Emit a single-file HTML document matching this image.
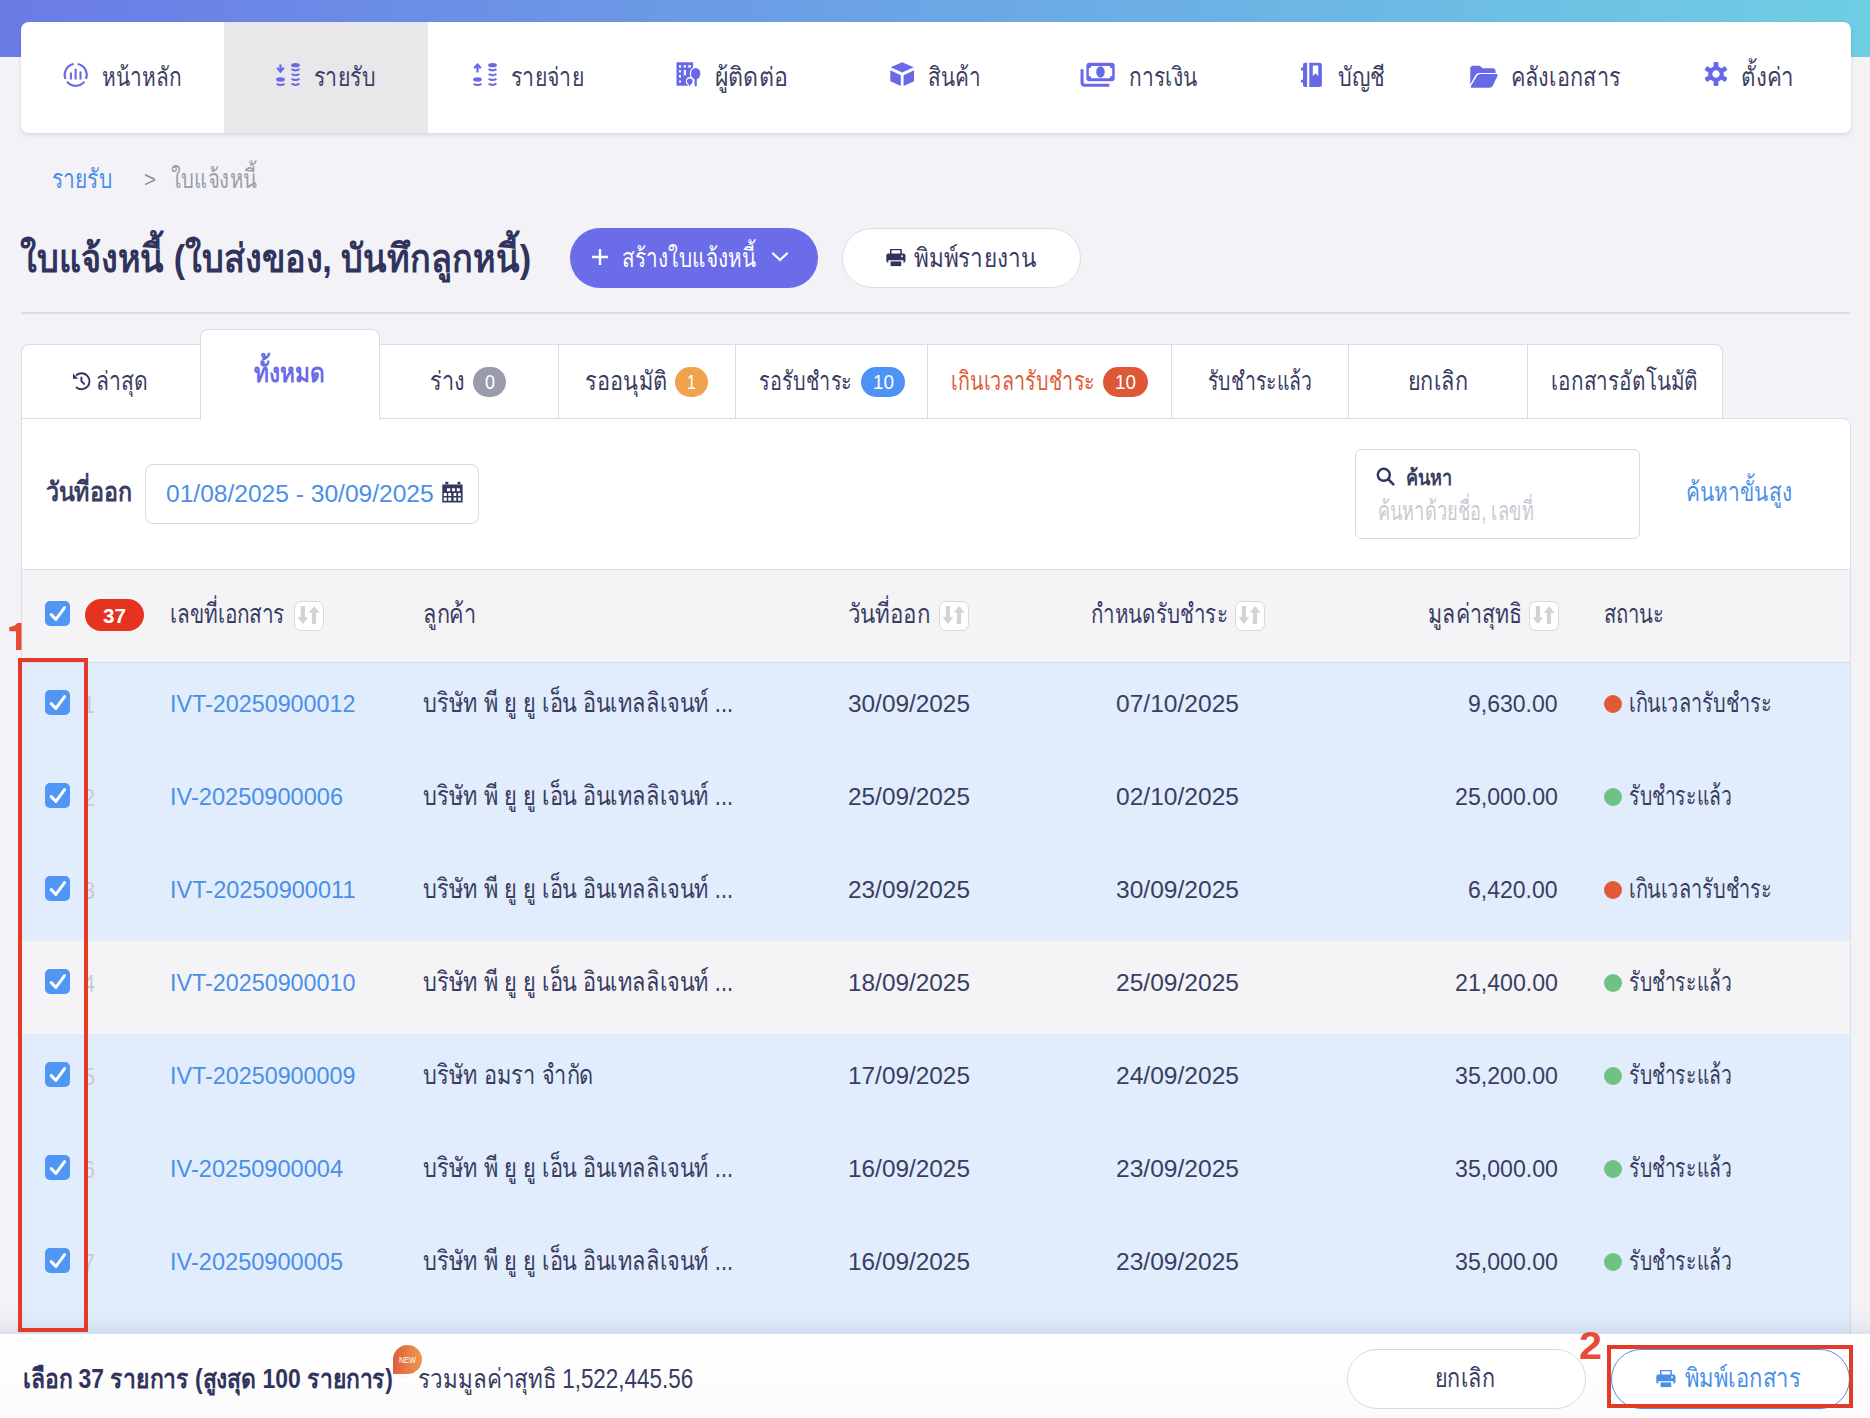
<!DOCTYPE html>
<html><head><meta charset="utf-8"><style>
html,body{margin:0;padding:0}
body{width:1870px;height:1418px;overflow:hidden;position:relative;background:#f3f3f7;font-family:"Liberation Sans", sans-serif}
.t{position:absolute;white-space:nowrap;transform-origin:0 0}
</style></head><body>
<div style="position:absolute;left:0;top:0;width:1870px;height:57px;background:linear-gradient(90deg,#6b7be6 0%,#6ba6e5 50%,#6ecee3 100%)"></div>
<div style="position:absolute;left:21px;top:22px;width:1830px;height:111px;background:#fff;border-radius:8px;box-shadow:0 2px 4px rgba(40,40,80,.14);overflow:hidden"><div style="position:absolute;left:203px;top:0;width:204px;height:111px;background:#e8e8ea"></div></div>
<svg width="26" height="26" viewBox="0 0 26 26" style="position:absolute;left:62.5px;top:61.5px"><g fill="none" stroke="#6869e7" stroke-width="2.2"><path d="M2.5 16.92A11 11 0 0 1 10.79 1.97"/><path d="M14.61 1.97A11 11 0 0 1 22.9 16.92"/><path d="M21.37 19.57A11 11 0 0 1 4.03 19.57"/><path d="M7.9 10.4V17.6M12.6 6.8V17.6M17.5 9.5V17.6" stroke-width="2.1"/></g></svg>
<svg width="25" height="25" viewBox="0 0 25 25" style="position:absolute;left:275.5px;top:63px"><path d="M4.5 1.5V8" stroke="#6869e7" stroke-width="2.2"/><path d="M1.2 4.8L4.5 8.5L7.8 4.8" fill="none" stroke="#6869e7" stroke-width="2.2"/><ellipse cx="4.5" cy="16.5" rx="4.3" ry="2.2" fill="#6869e7"/><path d="M0.6 20.8 Q4.5 23.4 8.4 20.8" fill="none" stroke="#6869e7" stroke-width="2"/><ellipse cx="19.5" cy="2.2" rx="4.3" ry="2.1" fill="#6869e7"/><path d="M15.6 6.2 Q19.5 8.8 23.4 6.2" fill="none" stroke="#6869e7" stroke-width="2"/><path d="M15.6 11.0 Q19.5 13.6 23.4 11.0" fill="none" stroke="#6869e7" stroke-width="2"/><path d="M15.6 15.8 Q19.5 18.400000000000002 23.4 15.8" fill="none" stroke="#6869e7" stroke-width="2"/><path d="M15.6 20.599999999999998 Q19.5 23.2 23.4 20.599999999999998" fill="none" stroke="#6869e7" stroke-width="2"/></svg>
<svg width="25" height="25" viewBox="0 0 25 25" style="position:absolute;left:472.5px;top:63px"><path d="M4.5 2.5V9.5" stroke="#6869e7" stroke-width="2.2"/><path d="M1.2 5.2L4.5 1.5L7.8 5.2" fill="none" stroke="#6869e7" stroke-width="2.2"/><ellipse cx="4.5" cy="16.5" rx="4.3" ry="2.2" fill="#6869e7"/><path d="M0.6 20.8 Q4.5 23.4 8.4 20.8" fill="none" stroke="#6869e7" stroke-width="2"/><ellipse cx="19.5" cy="2.2" rx="4.3" ry="2.1" fill="#6869e7"/><path d="M15.6 6.2 Q19.5 8.8 23.4 6.2" fill="none" stroke="#6869e7" stroke-width="2"/><path d="M15.6 11.0 Q19.5 13.6 23.4 11.0" fill="none" stroke="#6869e7" stroke-width="2"/><path d="M15.6 15.8 Q19.5 18.400000000000002 23.4 15.8" fill="none" stroke="#6869e7" stroke-width="2"/><path d="M15.6 20.599999999999998 Q19.5 23.2 23.4 20.599999999999998" fill="none" stroke="#6869e7" stroke-width="2"/></svg>
<svg width="26" height="26" viewBox="0 0 26 26" style="position:absolute;left:676px;top:62px"><path fill="#6869e7" fill-rule="evenodd" d="M0.5 0.3H17.1V15H12.5V23.7H0.5Z M3 3.2V5.4H5V3.2Z M7.8 3.2V5.4H9.9V3.2Z M12.3 3.2V5.4H14.9V3.2Z M3 8.2V10.5H5V8.2Z M7.8 8V13.3H9.9V8Z M3 13V15.6H5V13Z M3 18.4V20.6H5V18.4Z"/><ellipse cx="19.7" cy="11.6" rx="5.9" ry="6.9" fill="#fff"/><path d="M19.65 17V24.3" stroke="#fff" stroke-width="4.6" stroke-linecap="round"/><circle cx="13.8" cy="19.3" r="4" fill="#fff"/><path d="M10.6 20.5L13.7 26.2L16.9 20.5Z" fill="#fff"/><ellipse cx="19.7" cy="11.6" rx="4.65" ry="5.7" fill="#6869e7"/><path d="M19.65 16V23.3" stroke="#6869e7" stroke-width="2.3" stroke-linecap="round"/><circle cx="13.8" cy="19.3" r="2.8" fill="#6869e7"/><path d="M11.4 20.6L13.7 24.3L16.1 20.6Z" fill="#6869e7"/></svg>
<svg width="25" height="25" viewBox="0 0 25 25" style="position:absolute;left:890px;top:62px"><path fill="#6869e7" d="M12.2 0.3L23.7 5.3L12.2 10.6L0.7 5.3Z M0.3 8.3L10.8 13.2V24L0.3 19.2Z M13.6 13.2L24 8.3V19.2L13.6 24Z"/></svg>
<svg width="36" height="26" viewBox="0 0 36 26" style="position:absolute;left:1079.5px;top:61.5px"><path fill="#6869e7" fill-rule="evenodd" d="M9.4 0.8H31.7Q34.7 0.8 34.7 3.8V16.3Q34.7 19.3 31.7 19.3H9.4Q6.4 19.3 6.4 16.3V3.8Q6.4 0.8 9.4 0.8Z M11.3 3.9H29.7Q30 6.3 32.2 6.4V13.8Q30 13.9 29.7 16.3H11.3Q11 13.9 8.8 13.8V6.4Q11 6.3 11.3 3.9Z"/><ellipse cx="20.5" cy="10" rx="4.25" ry="5.8" fill="#6869e7"/><path d="M2.05 7.2V20.5Q2.05 23.3 4.85 23.3H29.3" fill="none" stroke="#6869e7" stroke-width="3"/></svg>
<svg width="24" height="26" viewBox="0 0 24 26" style="position:absolute;left:1300px;top:61.5px"><path fill="#6869e7" d="M5 0.7H7.1V24.9H5Q3 24.9 3 22.9V20.6H1.2Q0.1 19.2 1.2 17.8H3V8.4H1.2Q0.1 7 1.2 5.6H3V2.7Q3 0.7 5 0.7Z"/><path fill="#6869e7" fill-rule="evenodd" d="M9.3 0.7H19.4Q21.9 0.7 21.9 3.2V22.4Q21.9 24.9 19.4 24.9H9.3Z M12.8 3.4V13.9L15.5 11.4L18.2 13.9V3.4Z"/></svg>
<svg width="29" height="24" viewBox="0 0 29 24" style="position:absolute;left:1469.5px;top:64.5px"><path fill="#6869e7" d="M0.3 3.5Q0.3 0.8 3 0.8H9.8L12.5 3.3H23Q25.5 3.3 25.6 6.5V8H8.8Q6.6 8 5.6 10L0.3 19.5Z"/><path fill="#6869e7" d="M7.2 10.5Q8 9 10 9H26.5Q28.3 9 27.6 10.8L22.8 20.8Q21.8 22.8 19.6 22.8H1.8Q0 22.8 0.8 21.2Z"/></svg>
<svg width="24" height="26" viewBox="0 0 24 26" style="position:absolute;left:1703.6px;top:60.9px"><g fill="#6869e7"><path fill-rule="evenodd" d="M12 5.2A7.8 7.8 0 1 1 11.99 5.2Z M12 9.3A3.7 3.7 0 1 0 12.01 9.3Z"/><rect x="9.6" y="1" width="4.8" height="6" rx="1"/><rect x="9.6" y="19" width="4.8" height="6" rx="1"/><rect x="9.6" y="1" width="4.8" height="6" rx="1" transform="rotate(60 12 13)"/><rect x="9.6" y="19" width="4.8" height="6" rx="1" transform="rotate(60 12 13)"/><rect x="9.6" y="1" width="4.8" height="6" rx="1" transform="rotate(-60 12 13)"/><rect x="9.6" y="19" width="4.8" height="6" rx="1" transform="rotate(-60 12 13)"/></g></svg>
<div style="position:absolute;left:570px;top:228px;width:248px;height:60px;border-radius:30px;background:#6b6ce8"></div>
<svg width="20" height="20" viewBox="0 0 20 20" style="position:absolute;left:590px;top:247px"><path d="M10 2V18M2 10H18" stroke="#fff" stroke-width="2.4"/></svg>
<svg width="18" height="12" viewBox="0 0 18 12" style="position:absolute;left:771px;top:251px"><path d="M2 2.5L9 9L16 2.5" fill="none" stroke="#fff" stroke-width="2.2" stroke-linecap="round"/></svg>
<div style="position:absolute;left:842px;top:228px;width:237px;height:58px;border-radius:30px;background:#fff;border:1px solid #dcdce4"></div>
<svg width="20" height="20" viewBox="0 0 20 20" style="position:absolute;left:885.5px;top:247px"><path fill="#30345c" fill-rule="evenodd" d="M4 2H15.8V6.6H17.5Q19.5 6.6 19.5 8.6V13.5Q19.5 15.7 17.5 15.7V13.2H2.3V15.7Q0.3 15.7 0.3 13.5V8.6Q0.3 6.6 2.3 6.6H4Z M5.5 3.3V6.6H14.3V3.3Z M16 8.3A0.9 0.9 0 1 0 16.01 8.3Z"/><rect x="4.6" y="14.4" width="10.6" height="4.7" fill="#30345c"/></svg>
<div style="position:absolute;left:21px;top:312px;width:1829px;height:1.5px;background:#dcdce3"></div>
<div style="position:absolute;left:21px;top:344px;width:1702px;height:75px;background:#fff;border:1px solid #dddce6;border-bottom:none;border-radius:8px 8px 0 0;box-sizing:border-box"></div>
<div style="position:absolute;left:557.5px;top:345px;width:1px;height:74px;background:#dddce6"></div>
<div style="position:absolute;left:735px;top:345px;width:1px;height:74px;background:#dddce6"></div>
<div style="position:absolute;left:927px;top:345px;width:1px;height:74px;background:#dddce6"></div>
<div style="position:absolute;left:1170.5px;top:345px;width:1px;height:74px;background:#dddce6"></div>
<div style="position:absolute;left:1348px;top:345px;width:1px;height:74px;background:#dddce6"></div>
<div style="position:absolute;left:1527px;top:345px;width:1px;height:74px;background:#dddce6"></div>
<div style="position:absolute;left:21px;top:418px;width:1830px;height:1000px;background:#fff;border:1px solid #dddce6;border-radius:0 8px 0 0;box-sizing:border-box"></div>
<div style="position:absolute;left:200px;top:329px;width:180px;height:91px;background:#fff;border:1px solid #dddce6;border-bottom:none;border-radius:8px 8px 0 0;box-sizing:border-box"></div>
<svg width="30" height="30" viewBox="0 0 30 30" style="position:absolute;left:66px;top:362px"><g fill="none" stroke="#30345c" stroke-width="1.9"><path d="M10.57 12.9A8 8 0 1 1 10.57 25.5" stroke-linecap="round"/><path d="M15.4 15.4V19.2L18.1 21.9" stroke-linecap="round"/></g><path d="M7 11.6L7 16.8L12.2 16.8Z" fill="#30345c"/></svg>
<div style="position:absolute;left:473px;top:367px;width:33px;height:30px;border-radius:15px;background:#9b9cab"></div>
<div style="position:absolute;left:675px;top:367px;width:33px;height:30px;border-radius:15px;background:#f0a24c"></div>
<div style="position:absolute;left:861px;top:367px;width:44px;height:30px;border-radius:15px;background:#4c93f4"></div>
<div style="position:absolute;left:1103px;top:367px;width:45px;height:30px;border-radius:15px;background:#dd5836"></div>
<div style="position:absolute;left:144.5px;top:464px;width:334px;height:60px;border:1px solid #d9d9e4;border-radius:8px;box-sizing:border-box;background:#fff"></div>
<svg width="21" height="22" viewBox="0 0 21 22" style="position:absolute;left:442px;top:481px"><path fill="#34375e" fill-rule="evenodd" d="M0.3 3.6H20.6V21.5H0.3Z M5 7.3V10.3H8.2V7.3Z M10 7.3V10.3H13V7.3Z M14.8 7.3V10.3H17.8V7.3Z M1.8 11.9V14.9H4.8V11.9Z M6.2 11.9V14.9H9.2V11.9Z M11.6 11.9V14.9H14.3V11.9Z M16.1 11.9V14.9H18.8V11.9Z M1.8 16.6V19.8H4.8V16.6Z M6.2 16.6V19.8H9.2V16.6Z M11.6 16.6V19.8H14.3V16.6Z M16.1 16.6V19.8H18.8V16.6Z"/><rect x="3.3" y="0.8" width="3" height="2.5" fill="#34375e"/><rect x="15.5" y="0.8" width="3" height="2.5" fill="#34375e"/></svg>
<div style="position:absolute;left:1355px;top:449px;width:285px;height:90px;border:1px solid #d9d9e4;border-radius:6px;box-sizing:border-box;background:#fff"></div>
<svg width="19" height="19" viewBox="0 0 19 19" style="position:absolute;left:1375.5px;top:466.8px"><circle cx="7.8" cy="7.8" r="6" fill="none" stroke="#30345c" stroke-width="2.4"/><path d="M12.2 12.2L17.3 17.3" stroke="#30345c" stroke-width="2.6" stroke-linecap="round"/></svg>
<div style="position:absolute;left:22px;top:569px;width:1828px;height:94px;background:#f4f4f7;border-top:1px solid #dddce6;border-bottom:1px solid #d7dbe8;box-sizing:border-box"></div>
<div style="position:absolute;left:45px;top:601px;width:25px;height:25px;border-radius:5px;background:#5096f5"></div><svg width="25" height="25" viewBox="0 0 25 25" style="position:absolute;left:45px;top:601px"><path d="M6.2 13.6L10.9 18.4L19.6 6.6" fill="none" stroke="#fff" stroke-width="3" stroke-linecap="round" stroke-linejoin="round"/></svg>
<div style="position:absolute;left:85px;top:599px;width:59px;height:32px;border-radius:16px;background:#e5331f"></div>
<div style="position:absolute;left:294px;top:601px;width:30px;height:30px;border:1.5px solid #d9d9d9;border-radius:7px;background:#fff;box-sizing:border-box"></div><svg width="30" height="30" viewBox="0 0 30 30" style="position:absolute;left:294px;top:601px"><path fill="#d2d2d2" d="M6.8 5H11V16.3H14.3L8.9 23L3.5 16.3H6.8Z M20.2 5L25.6 11.8H22.1V23H17.9V11.8H14.8Z"/></svg>
<div style="position:absolute;left:939px;top:601px;width:30px;height:30px;border:1.5px solid #d9d9d9;border-radius:7px;background:#fff;box-sizing:border-box"></div><svg width="30" height="30" viewBox="0 0 30 30" style="position:absolute;left:939px;top:601px"><path fill="#d2d2d2" d="M6.8 5H11V16.3H14.3L8.9 23L3.5 16.3H6.8Z M20.2 5L25.6 11.8H22.1V23H17.9V11.8H14.8Z"/></svg>
<div style="position:absolute;left:1235px;top:601px;width:30px;height:30px;border:1.5px solid #d9d9d9;border-radius:7px;background:#fff;box-sizing:border-box"></div><svg width="30" height="30" viewBox="0 0 30 30" style="position:absolute;left:1235px;top:601px"><path fill="#d2d2d2" d="M6.8 5H11V16.3H14.3L8.9 23L3.5 16.3H6.8Z M20.2 5L25.6 11.8H22.1V23H17.9V11.8H14.8Z"/></svg>
<div style="position:absolute;left:1529px;top:601px;width:30px;height:30px;border:1.5px solid #d9d9d9;border-radius:7px;background:#fff;box-sizing:border-box"></div><svg width="30" height="30" viewBox="0 0 30 30" style="position:absolute;left:1529px;top:601px"><path fill="#d2d2d2" d="M6.8 5H11V16.3H14.3L8.9 23L3.5 16.3H6.8Z M20.2 5L25.6 11.8H22.1V23H17.9V11.8H14.8Z"/></svg>
<div style="position:absolute;left:22px;top:663px;width:1828px;height:92px;background:#e1edfc"></div>
<div style="position:absolute;left:22px;top:755px;width:1828px;height:93px;background:#e1edfc"></div>
<div style="position:absolute;left:22px;top:848px;width:1828px;height:93px;background:#e1edfc"></div>
<div style="position:absolute;left:22px;top:941px;width:1828px;height:93px;background:#f4f4f7"></div>
<div style="position:absolute;left:22px;top:1034px;width:1828px;height:93px;background:#e1edfc"></div>
<div style="position:absolute;left:22px;top:1127px;width:1828px;height:93px;background:#e1edfc"></div>
<div style="position:absolute;left:22px;top:1220px;width:1828px;height:93px;background:#e1edfc"></div>
<div style="position:absolute;left:22px;top:1313px;width:1828px;height:93px;background:#e1edfc"></div>
<div style="position:absolute;left:45px;top:690px;width:25px;height:25px;border-radius:5px;background:#5096f5"></div><svg width="25" height="25" viewBox="0 0 25 25" style="position:absolute;left:45px;top:690px"><path d="M6.2 13.6L10.9 18.4L19.6 6.6" fill="none" stroke="#fff" stroke-width="3" stroke-linecap="round" stroke-linejoin="round"/></svg>
<div style="position:absolute;left:1604px;top:695px;width:18px;height:18px;border-radius:9px;background:#e05a38"></div>
<div style="position:absolute;left:45px;top:783px;width:25px;height:25px;border-radius:5px;background:#5096f5"></div><svg width="25" height="25" viewBox="0 0 25 25" style="position:absolute;left:45px;top:783px"><path d="M6.2 13.6L10.9 18.4L19.6 6.6" fill="none" stroke="#fff" stroke-width="3" stroke-linecap="round" stroke-linejoin="round"/></svg>
<div style="position:absolute;left:1604px;top:788px;width:18px;height:18px;border-radius:9px;background:#6fc284"></div>
<div style="position:absolute;left:45px;top:876px;width:25px;height:25px;border-radius:5px;background:#5096f5"></div><svg width="25" height="25" viewBox="0 0 25 25" style="position:absolute;left:45px;top:876px"><path d="M6.2 13.6L10.9 18.4L19.6 6.6" fill="none" stroke="#fff" stroke-width="3" stroke-linecap="round" stroke-linejoin="round"/></svg>
<div style="position:absolute;left:1604px;top:881px;width:18px;height:18px;border-radius:9px;background:#e05a38"></div>
<div style="position:absolute;left:45px;top:969px;width:25px;height:25px;border-radius:5px;background:#5096f5"></div><svg width="25" height="25" viewBox="0 0 25 25" style="position:absolute;left:45px;top:969px"><path d="M6.2 13.6L10.9 18.4L19.6 6.6" fill="none" stroke="#fff" stroke-width="3" stroke-linecap="round" stroke-linejoin="round"/></svg>
<div style="position:absolute;left:1604px;top:974px;width:18px;height:18px;border-radius:9px;background:#6fc284"></div>
<div style="position:absolute;left:45px;top:1062px;width:25px;height:25px;border-radius:5px;background:#5096f5"></div><svg width="25" height="25" viewBox="0 0 25 25" style="position:absolute;left:45px;top:1062px"><path d="M6.2 13.6L10.9 18.4L19.6 6.6" fill="none" stroke="#fff" stroke-width="3" stroke-linecap="round" stroke-linejoin="round"/></svg>
<div style="position:absolute;left:1604px;top:1067px;width:18px;height:18px;border-radius:9px;background:#6fc284"></div>
<div style="position:absolute;left:45px;top:1155px;width:25px;height:25px;border-radius:5px;background:#5096f5"></div><svg width="25" height="25" viewBox="0 0 25 25" style="position:absolute;left:45px;top:1155px"><path d="M6.2 13.6L10.9 18.4L19.6 6.6" fill="none" stroke="#fff" stroke-width="3" stroke-linecap="round" stroke-linejoin="round"/></svg>
<div style="position:absolute;left:1604px;top:1160px;width:18px;height:18px;border-radius:9px;background:#6fc284"></div>
<div style="position:absolute;left:45px;top:1248px;width:25px;height:25px;border-radius:5px;background:#5096f5"></div><svg width="25" height="25" viewBox="0 0 25 25" style="position:absolute;left:45px;top:1248px"><path d="M6.2 13.6L10.9 18.4L19.6 6.6" fill="none" stroke="#fff" stroke-width="3" stroke-linecap="round" stroke-linejoin="round"/></svg>
<div style="position:absolute;left:1604px;top:1253px;width:18px;height:18px;border-radius:9px;background:#6fc284"></div>
<div style="position:absolute;left:0;top:1304px;width:1870px;height:30px;background:linear-gradient(rgba(20,50,90,0),rgba(20,50,90,.03) 60%,rgba(20,50,90,.09))"></div>
<div style="position:absolute;left:0;top:1334px;width:1870px;height:84px;background:linear-gradient(#fff,#fbfbfc)"></div>
<div style="position:absolute;left:1346.5px;top:1349px;width:239px;height:60px;border-radius:30px;border:1px solid #d9d9e3;box-sizing:border-box;background:#fff"></div>
<div style="position:absolute;left:1610.5px;top:1349px;width:239px;height:60px;border-radius:30px;border:1.3px solid #4a8fe8;box-sizing:border-box;background:#fff"></div>
<svg width="20" height="20" viewBox="0 0 20 20" style="position:absolute;left:1656px;top:1367.5px"><path fill="#4a8fe8" fill-rule="evenodd" d="M4 2H15.8V6.6H17.5Q19.5 6.6 19.5 8.6V13.5Q19.5 15.7 17.5 15.7V13.2H2.3V15.7Q0.3 15.7 0.3 13.5V8.6Q0.3 6.6 2.3 6.6H4Z M5.5 3.3V6.6H14.3V3.3Z M16 8.3A0.9 0.9 0 1 0 16.01 8.3Z"/><rect x="4.6" y="14.4" width="10.6" height="4.7" fill="#4a8fe8"/></svg>
<div style="position:absolute;left:392.5px;top:1344.5px;width:29.5px;height:29.5px;border-radius:15px 15px 15px 0;background:linear-gradient(90deg,#df5d3c,#ec9a50);box-shadow:0 0 0 2px #fff,0 1px 3px rgba(0,0,0,.18)"></div>
<div class=t style="left:101.6px;top:64.0px;font-size:26px;line-height:26px;font-weight:400;color:#3d4064;transform:scaleX(0.802)">หน้าหลัก</div>
<div class=t style="left:313.6px;top:64.0px;font-size:26px;line-height:26px;font-weight:400;color:#3d4064;transform:scaleX(0.821)">รายรับ</div>
<div class=t style="left:511.0px;top:64.0px;font-size:26px;line-height:26px;font-weight:400;color:#3d4064;transform:scaleX(0.818)">รายจ่าย</div>
<div class=t style="left:715.0px;top:64.0px;font-size:26px;line-height:26px;font-weight:400;color:#3d4064;transform:scaleX(0.890)">ผู้ติดต่อ</div>
<div class=t style="left:928.0px;top:64.0px;font-size:26px;line-height:26px;font-weight:400;color:#3d4064;transform:scaleX(0.797)">สินค้า</div>
<div class=t style="left:1129.0px;top:64.0px;font-size:26px;line-height:26px;font-weight:400;color:#3d4064;transform:scaleX(0.806)">การเงิน</div>
<div class=t style="left:1337.5px;top:64.0px;font-size:26px;line-height:26px;font-weight:400;color:#3d4064;transform:scaleX(0.833)">บัญชี</div>
<div class=t style="left:1511.0px;top:64.0px;font-size:26px;line-height:26px;font-weight:400;color:#3d4064;transform:scaleX(0.833)">คลังเอกสาร</div>
<div class=t style="left:1741.0px;top:64.0px;font-size:26px;line-height:26px;font-weight:400;color:#3d4064;transform:scaleX(0.855)">ตั้งค่า</div>
<div class=t style="left:51.5px;top:165.5px;font-size:26px;line-height:26px;font-weight:400;color:#4a8fe8;transform:scaleX(0.807)">รายรับ</div>
<div class=t style="left:144.0px;top:169.4px;font-size:22px;line-height:22px;font-weight:400;color:#8d8e9e;transform:scaleX(0.933)">></div>
<div class=t style="left:171.0px;top:165.5px;font-size:26px;line-height:26px;font-weight:400;color:#9c9cab;transform:scaleX(0.782)">ใบแจ้งหนี้</div>
<div class=t style="left:20.4px;top:239.3px;font-size:39px;line-height:39px;font-weight:700;color:#30345c;transform:scaleX(0.879)">ใบแจ้งหนี้ (ใบส่งของ, บันทึกลูกหนี้)</div>
<div class=t style="left:622.0px;top:244.5px;font-size:26px;line-height:26px;font-weight:400;color:#ffffff;transform:scaleX(0.798)">สร้างใบแจ้งหนี้</div>
<div class=t style="left:914.0px;top:244.5px;font-size:26px;line-height:26px;font-weight:400;color:#3a3d62;transform:scaleX(0.869)">พิมพ์รายงาน</div>
<div class=t style="left:96.0px;top:368.0px;font-size:26px;line-height:26px;font-weight:400;color:#3a3d62;transform:scaleX(0.812)">ล่าสุด</div>
<div class=t style="left:253.5px;top:359.7px;font-size:27px;line-height:27px;font-weight:700;color:#6a6ce6;transform:scaleX(0.838)">ทั้งหมด</div>
<div class=t style="left:430.0px;top:368.0px;font-size:26px;line-height:26px;font-weight:400;color:#3a3d62;transform:scaleX(0.833)">ร่าง</div>
<div class=t style="left:585.0px;top:368.0px;font-size:26px;line-height:26px;font-weight:400;color:#3a3d62;transform:scaleX(0.837)">รออนุมัติ</div>
<div class=t style="left:759.0px;top:368.0px;font-size:26px;line-height:26px;font-weight:400;color:#3a3d62;transform:scaleX(0.762)">รอรับชำระ</div>
<div class=t style="left:951.0px;top:368.0px;font-size:26px;line-height:26px;font-weight:400;color:#e05a3a;transform:scaleX(0.758)">เกินเวลารับชำระ</div>
<div class=t style="left:1207.5px;top:368.0px;font-size:26px;line-height:26px;font-weight:400;color:#3a3d62;transform:scaleX(0.746)">รับชำระแล้ว</div>
<div class=t style="left:1407.5px;top:368.0px;font-size:26px;line-height:26px;font-weight:400;color:#3a3d62;transform:scaleX(0.833)">ยกเลิก</div>
<div class=t style="left:1551.0px;top:368.0px;font-size:26px;line-height:26px;font-weight:400;color:#3a3d62;transform:scaleX(0.795)">เอกสารอัตโนมัติ</div>
<div class=t style="left:484.5px;top:372.5px;font-size:19.5px;line-height:19.5px;font-weight:400;color:#ffffff;transform:scaleX(0.921)">0</div>
<div class=t style="left:687.0px;top:372.5px;font-size:19.5px;line-height:19.5px;font-weight:400;color:#ffffff;transform:scaleX(0.829)">1</div>
<div class=t style="left:873.0px;top:372.5px;font-size:19.5px;line-height:19.5px;font-weight:400;color:#ffffff;transform:scaleX(0.968)">10</div>
<div class=t style="left:1115.0px;top:372.5px;font-size:19.5px;line-height:19.5px;font-weight:400;color:#ffffff;transform:scaleX(0.968)">10</div>
<div class=t style="left:45.7px;top:479.1px;font-size:27px;line-height:27px;font-weight:700;color:#3a3d62;transform:scaleX(0.862)">วันที่ออก</div>
<div class=t style="left:166.0px;top:482.5px;font-size:23px;line-height:23px;font-weight:400;color:#4a8fe8;transform:scaleX(1.068)">01/08/2025 - 30/09/2025</div>
<div class=t style="left:1405.5px;top:467.2px;font-size:21px;line-height:21px;font-weight:700;color:#3a3d62;transform:scaleX(0.861)">ค้นหา</div>
<div class=t style="left:1377.6px;top:498.2px;font-size:26px;line-height:26px;font-weight:400;color:#c9c9d4;transform:scaleX(0.699)">ค้นหาด้วยชื่อ, เลขที่</div>
<div class=t style="left:1686.0px;top:479.0px;font-size:26px;line-height:26px;font-weight:400;color:#4a8fe8;transform:scaleX(0.803)">ค้นหาขั้นสูง</div>
<div class=t style="left:102.5px;top:605.2px;font-size:21px;line-height:21px;font-weight:700;color:#ffffff;transform:scaleX(0.985)">37</div>
<div class=t style="left:169.8px;top:600.9px;font-size:27px;line-height:27px;font-weight:400;color:#3a3d62;transform:scaleX(0.772)">เลขที่เอกสาร</div>
<div class=t style="left:423.0px;top:600.9px;font-size:27px;line-height:27px;font-weight:400;color:#3a3d62;transform:scaleX(0.803)">ลูกค้า</div>
<div class=t style="left:848.0px;top:600.9px;font-size:27px;line-height:27px;font-weight:400;color:#3a3d62;transform:scaleX(0.828)">วันที่ออก</div>
<div class=t style="left:1090.6px;top:600.9px;font-size:27px;line-height:27px;font-weight:400;color:#3a3d62;transform:scaleX(0.762)">กำหนดรับชำระ</div>
<div class=t style="left:1427.5px;top:600.9px;font-size:27px;line-height:27px;font-weight:400;color:#3a3d62;transform:scaleX(0.792)">มูลค่าสุทธิ</div>
<div class=t style="left:1604.0px;top:600.9px;font-size:27px;line-height:27px;font-weight:400;color:#3a3d62;transform:scaleX(0.750)">สถานะ</div>
<div class=t style="left:83.0px;top:693.5px;font-size:23px;line-height:23px;font-weight:400;color:#c9cad3;transform:scaleX(0.938)">1</div>
<div class=t style="left:170.0px;top:693.0px;font-size:23px;line-height:23px;font-weight:400;color:#4a8fe8;transform:scaleX(1.014)">IVT-20250900012</div>
<div class=t style="left:423.0px;top:689.6px;font-size:27px;line-height:27px;font-weight:400;color:#3a3d62;transform:scaleX(0.806)">บริษัท พี ยู ยู เอ็น อินเทลลิเจนท์ ...</div>
<div class=t style="left:848.0px;top:693.0px;font-size:23px;line-height:23px;font-weight:400;color:#3a3d62;transform:scaleX(1.060)">30/09/2025</div>
<div class=t style="left:1116.0px;top:693.0px;font-size:23px;line-height:23px;font-weight:400;color:#3a3d62;transform:scaleX(1.068)">07/10/2025</div>
<div class=t style="left:1468.4px;top:693.0px;font-size:23px;line-height:23px;font-weight:400;color:#3a3d62;transform:scaleX(1.001)">9,630.00</div>
<div class=t style="left:1629.0px;top:689.6px;font-size:27px;line-height:27px;font-weight:400;color:#3a3d62;transform:scaleX(0.740)">เกินเวลารับชำระ</div>
<div class=t style="left:83.0px;top:786.5px;font-size:23px;line-height:23px;font-weight:400;color:#c9cad3;transform:scaleX(0.938)">2</div>
<div class=t style="left:170.0px;top:786.0px;font-size:23px;line-height:23px;font-weight:400;color:#4a8fe8;transform:scaleX(1.025)">IV-20250900006</div>
<div class=t style="left:423.0px;top:782.6px;font-size:27px;line-height:27px;font-weight:400;color:#3a3d62;transform:scaleX(0.806)">บริษัท พี ยู ยู เอ็น อินเทลลิเจนท์ ...</div>
<div class=t style="left:848.0px;top:786.0px;font-size:23px;line-height:23px;font-weight:400;color:#3a3d62;transform:scaleX(1.060)">25/09/2025</div>
<div class=t style="left:1116.0px;top:786.0px;font-size:23px;line-height:23px;font-weight:400;color:#3a3d62;transform:scaleX(1.068)">02/10/2025</div>
<div class=t style="left:1455.0px;top:786.0px;font-size:23px;line-height:23px;font-weight:400;color:#3a3d62;transform:scaleX(1.007)">25,000.00</div>
<div class=t style="left:1628.5px;top:782.6px;font-size:27px;line-height:27px;font-weight:400;color:#3a3d62;transform:scaleX(0.715)">รับชำระแล้ว</div>
<div class=t style="left:83.0px;top:879.5px;font-size:23px;line-height:23px;font-weight:400;color:#c9cad3;transform:scaleX(0.938)">3</div>
<div class=t style="left:170.0px;top:879.0px;font-size:23px;line-height:23px;font-weight:400;color:#4a8fe8;transform:scaleX(1.024)">IVT-20250900011</div>
<div class=t style="left:423.0px;top:875.6px;font-size:27px;line-height:27px;font-weight:400;color:#3a3d62;transform:scaleX(0.806)">บริษัท พี ยู ยู เอ็น อินเทลลิเจนท์ ...</div>
<div class=t style="left:848.0px;top:879.0px;font-size:23px;line-height:23px;font-weight:400;color:#3a3d62;transform:scaleX(1.060)">23/09/2025</div>
<div class=t style="left:1116.0px;top:879.0px;font-size:23px;line-height:23px;font-weight:400;color:#3a3d62;transform:scaleX(1.068)">30/09/2025</div>
<div class=t style="left:1468.4px;top:879.0px;font-size:23px;line-height:23px;font-weight:400;color:#3a3d62;transform:scaleX(1.001)">6,420.00</div>
<div class=t style="left:1629.0px;top:875.6px;font-size:27px;line-height:27px;font-weight:400;color:#3a3d62;transform:scaleX(0.740)">เกินเวลารับชำระ</div>
<div class=t style="left:83.0px;top:972.5px;font-size:23px;line-height:23px;font-weight:400;color:#c9cad3;transform:scaleX(0.938)">4</div>
<div class=t style="left:170.0px;top:972.0px;font-size:23px;line-height:23px;font-weight:400;color:#4a8fe8;transform:scaleX(1.014)">IVT-20250900010</div>
<div class=t style="left:423.0px;top:968.6px;font-size:27px;line-height:27px;font-weight:400;color:#3a3d62;transform:scaleX(0.806)">บริษัท พี ยู ยู เอ็น อินเทลลิเจนท์ ...</div>
<div class=t style="left:848.0px;top:972.0px;font-size:23px;line-height:23px;font-weight:400;color:#3a3d62;transform:scaleX(1.060)">18/09/2025</div>
<div class=t style="left:1116.0px;top:972.0px;font-size:23px;line-height:23px;font-weight:400;color:#3a3d62;transform:scaleX(1.068)">25/09/2025</div>
<div class=t style="left:1455.0px;top:972.0px;font-size:23px;line-height:23px;font-weight:400;color:#3a3d62;transform:scaleX(1.007)">21,400.00</div>
<div class=t style="left:1628.5px;top:968.6px;font-size:27px;line-height:27px;font-weight:400;color:#3a3d62;transform:scaleX(0.715)">รับชำระแล้ว</div>
<div class=t style="left:83.0px;top:1065.5px;font-size:23px;line-height:23px;font-weight:400;color:#c9cad3;transform:scaleX(0.938)">5</div>
<div class=t style="left:170.0px;top:1065.0px;font-size:23px;line-height:23px;font-weight:400;color:#4a8fe8;transform:scaleX(1.014)">IVT-20250900009</div>
<div class=t style="left:423.0px;top:1061.6px;font-size:27px;line-height:27px;font-weight:400;color:#3a3d62;transform:scaleX(0.807)">บริษัท อมรา จำกัด</div>
<div class=t style="left:848.0px;top:1065.0px;font-size:23px;line-height:23px;font-weight:400;color:#3a3d62;transform:scaleX(1.060)">17/09/2025</div>
<div class=t style="left:1116.0px;top:1065.0px;font-size:23px;line-height:23px;font-weight:400;color:#3a3d62;transform:scaleX(1.068)">24/09/2025</div>
<div class=t style="left:1455.0px;top:1065.0px;font-size:23px;line-height:23px;font-weight:400;color:#3a3d62;transform:scaleX(1.007)">35,200.00</div>
<div class=t style="left:1628.5px;top:1061.6px;font-size:27px;line-height:27px;font-weight:400;color:#3a3d62;transform:scaleX(0.715)">รับชำระแล้ว</div>
<div class=t style="left:83.0px;top:1158.5px;font-size:23px;line-height:23px;font-weight:400;color:#c9cad3;transform:scaleX(0.938)">6</div>
<div class=t style="left:170.0px;top:1158.0px;font-size:23px;line-height:23px;font-weight:400;color:#4a8fe8;transform:scaleX(1.025)">IV-20250900004</div>
<div class=t style="left:423.0px;top:1154.6px;font-size:27px;line-height:27px;font-weight:400;color:#3a3d62;transform:scaleX(0.806)">บริษัท พี ยู ยู เอ็น อินเทลลิเจนท์ ...</div>
<div class=t style="left:848.0px;top:1158.0px;font-size:23px;line-height:23px;font-weight:400;color:#3a3d62;transform:scaleX(1.060)">16/09/2025</div>
<div class=t style="left:1116.0px;top:1158.0px;font-size:23px;line-height:23px;font-weight:400;color:#3a3d62;transform:scaleX(1.068)">23/09/2025</div>
<div class=t style="left:1455.0px;top:1158.0px;font-size:23px;line-height:23px;font-weight:400;color:#3a3d62;transform:scaleX(1.007)">35,000.00</div>
<div class=t style="left:1628.5px;top:1154.6px;font-size:27px;line-height:27px;font-weight:400;color:#3a3d62;transform:scaleX(0.715)">รับชำระแล้ว</div>
<div class=t style="left:83.0px;top:1251.5px;font-size:23px;line-height:23px;font-weight:400;color:#c9cad3;transform:scaleX(0.938)">7</div>
<div class=t style="left:170.0px;top:1251.0px;font-size:23px;line-height:23px;font-weight:400;color:#4a8fe8;transform:scaleX(1.025)">IV-20250900005</div>
<div class=t style="left:423.0px;top:1247.6px;font-size:27px;line-height:27px;font-weight:400;color:#3a3d62;transform:scaleX(0.806)">บริษัท พี ยู ยู เอ็น อินเทลลิเจนท์ ...</div>
<div class=t style="left:848.0px;top:1251.0px;font-size:23px;line-height:23px;font-weight:400;color:#3a3d62;transform:scaleX(1.060)">16/09/2025</div>
<div class=t style="left:1116.0px;top:1251.0px;font-size:23px;line-height:23px;font-weight:400;color:#3a3d62;transform:scaleX(1.068)">23/09/2025</div>
<div class=t style="left:1455.0px;top:1251.0px;font-size:23px;line-height:23px;font-weight:400;color:#3a3d62;transform:scaleX(1.007)">35,000.00</div>
<div class=t style="left:1628.5px;top:1247.6px;font-size:27px;line-height:27px;font-weight:400;color:#3a3d62;transform:scaleX(0.715)">รับชำระแล้ว</div>
<div class=t style="left:23.0px;top:1365.6px;font-size:27px;line-height:27px;font-weight:700;color:#30345c;transform:scaleX(0.849)">เลือก 37 รายการ (สูงสุด 100 รายการ)</div>
<div class=t style="left:417.8px;top:1365.6px;font-size:27px;line-height:27px;font-weight:400;color:#3a3d62;transform:scaleX(0.831)">รวมมูลค่าสุทธิ 1,522,445.56</div>
<div class=t style="left:1435.4px;top:1365.0px;font-size:26px;line-height:26px;font-weight:400;color:#3a3d62;transform:scaleX(0.831)">ยกเลิก</div>
<div class=t style="left:1685.0px;top:1365.0px;font-size:26px;line-height:26px;font-weight:400;color:#4a8fe8;transform:scaleX(0.847)">พิมพ์เอกสาร</div>
<div class=t style="left:399.0px;top:1356.4px;font-size:9px;line-height:9px;font-weight:400;color:#ffffff;transform:scaleX(0.810)">NEW</div>
<div style="position:absolute;left:18px;top:658px;width:70px;height:674px;border:4px solid #e23b27;box-sizing:border-box"></div>
<svg width="30" height="40" viewBox="0 615 30 40" style="position:absolute;left:0;top:615px"><path fill="#e84b38" d="M17.3 623.1L21.5 623.1L21.5 649.9L16 649.9L16 631.3L9.3 631.3L9.3 627Q15 626.5 17.3 623.1Z"/></svg>
<div style="position:absolute;left:1579px;top:1326.8px;font-size:38px;line-height:38px;font-weight:700;color:#e84b38;transform:scaleX(1.09);transform-origin:0 0">2</div>
<div style="position:absolute;left:1607px;top:1345px;width:246px;height:63px;border:4px solid #e23b27;box-sizing:border-box"></div>
<script>
(function(){var W=[79.4, 61.6, 72.8, 73, 52.6, 68.5, 47.5, 110, 53, 60.5, 12, 86, 511.2, 134, 122.5, 52, 71.2, 35, 82, 93, 144, 104.5, 60.0, 147, 10.0, 9, 21, 21, 85.3, 267.7, 46.5, 155.4, 106, 23.0, 115.0, 53, 82, 137.1, 93.5, 60, 12, 185.5, 310, 122, 123, 89.6, 143.5, 12, 173, 310, 122, 123, 103, 103.0, 12, 185.5, 310, 122, 123, 89.6, 143.5, 12, 185.5, 310, 122, 123, 103, 103.0, 12, 185.5, 171, 122, 123, 103, 103.0, 12, 173, 310, 122, 123, 103, 103.0, 12, 173, 310, 122, 123, 103, 103.0, 369.8, 275.2, 59.8, 116, 17];
var el=document.querySelectorAll('.t');
for(var i=0;i<el.length&&i<W.length;i++){var e=el[i];e.style.transform='none';var w=e.getBoundingClientRect().width;if(w>0){e.style.transform='scaleX('+(W[i]/w).toFixed(4)+')';}}
})();
</script>
</body></html>
